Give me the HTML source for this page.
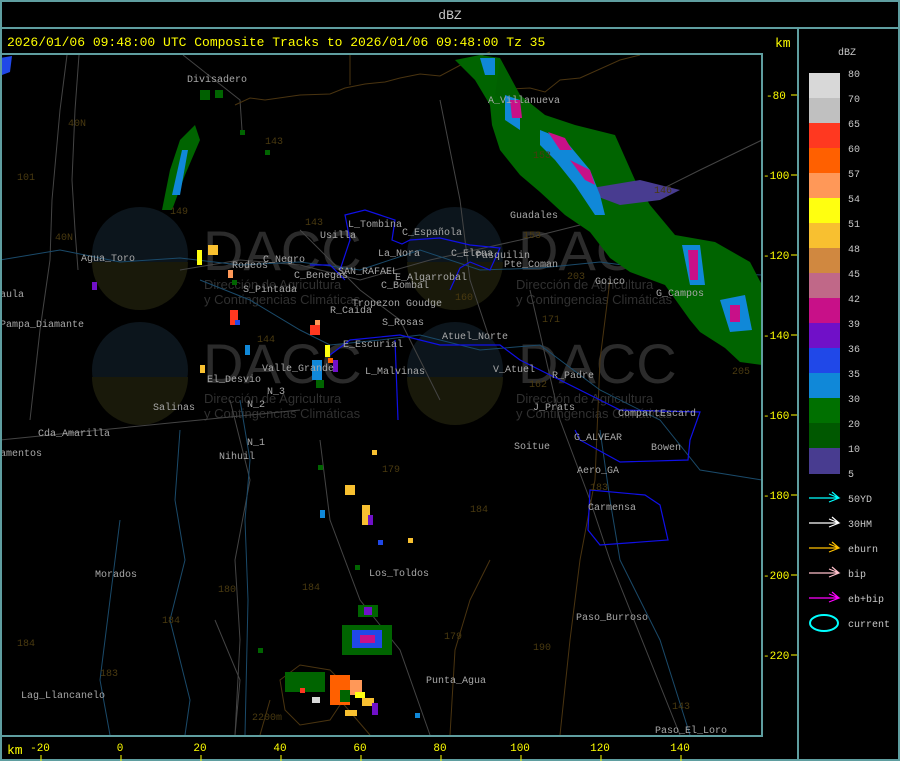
<!DOCTYPE html>
<html><head><meta charset="utf-8"><style>
html,body{margin:0;padding:0;background:#000;}
body{width:900px;height:761px;overflow:hidden;position:relative;}
svg{position:absolute;left:0;top:0;}
text{font-family:"Liberation Mono",monospace;}
</style></head><body>
<svg width="900" height="761" viewBox="0 0 900 761">
<rect width="900" height="761" fill="#000"/>
<g>
<circle cx="140" cy="255" r="48" fill="#0c151c"/><path d="M92 262 A48 48 0 0 0 188 262 Z" fill="#19190a"/>
<circle cx="140" cy="370" r="48" fill="#0c151c"/><path d="M92 377 A48 48 0 0 0 188 377 Z" fill="#19190a"/>
<circle cx="455" cy="255" r="48" fill="#0c151c"/><path d="M407 262 A48 48 0 0 0 503 262 Z" fill="#19190a"/>
<circle cx="455" cy="370" r="48" fill="#0c151c"/><path d="M407 377 A48 48 0 0 0 503 377 Z" fill="#19190a"/>
</g>
<g fill="#2b2b2b">
<text x="203" y="270" font-size="56" style="font-family:'Liberation Sans',sans-serif">DACC</text>
<text x="203" y="383" font-size="56" style="font-family:'Liberation Sans',sans-serif">DACC</text>
<text x="518" y="270" font-size="56" style="font-family:'Liberation Sans',sans-serif">DACC</text>
<text x="518" y="383" font-size="56" style="font-family:'Liberation Sans',sans-serif">DACC</text>
</g>
<g fill="#303030" font-size="13">
<text x="204" y="289" style="font-family:'Liberation Sans',sans-serif">Dirección de Agricultura</text>
<text x="204" y="304" style="font-family:'Liberation Sans',sans-serif">y Contingencias Climáticas</text>
<text x="204" y="403" style="font-family:'Liberation Sans',sans-serif">Dirección de Agricultura</text>
<text x="204" y="418" style="font-family:'Liberation Sans',sans-serif">y Contingencias Climáticas</text>
<text x="516" y="289" style="font-family:'Liberation Sans',sans-serif">Dirección de Agricultura</text>
<text x="516" y="304" style="font-family:'Liberation Sans',sans-serif">y Contingencias Climáticas</text>
<text x="516" y="403" style="font-family:'Liberation Sans',sans-serif">Dirección de Agricultura</text>
<text x="516" y="418" style="font-family:'Liberation Sans',sans-serif">y Contingencias Climáticas</text>
</g>
<g stroke="#444" fill="none" stroke-width="1">
<path d="M67 55 L60 110 L52 200 L50 260 L40 330 L30 420"/>
<path d="M79 55 L75 110 L72 180 L75 230 L78 270"/>
<path d="M183 55 L240 100 L242 130"/>
<path d="M300 230 L330 260 L360 290 L400 320 L420 360 L440 400"/>
<path d="M180 270 L240 260 L300 265 L360 280 L430 260 L520 240 L600 220 L700 170 L762 140"/>
<path d="M230 400 L250 480 L235 560 L240 640 L235 735"/>
<path d="M320 440 L330 520 L360 600 L400 650 L430 735"/>
<path d="M530 290 L560 420 L590 500 L610 560 L680 735"/>
<path d="M0 440 L100 430 L200 420 L300 410"/>
<path d="M440 100 L460 200 L470 280 L490 340"/>
<path d="M215 620 L240 680 L235 735"/>
</g>
<g stroke="#4a3410" fill="none" stroke-width="1">
<path d="M235 105 L250 98 L265 100 L300 95 L330 94 L345 88 L365 84 L385 82 L400 78 L420 74 L440 76 L470 60 L490 52"/>
<path d="M490 90 L530 88 L545 92 L560 80 L580 78 L620 60 L640 55"/>
<path d="M350 55 L350 85"/>
<path d="M610 280 L600 360 L595 480 L580 560 L570 640 L560 735"/>
<path d="M280 680 L300 665 L330 670 L350 690 L330 720 L300 725 L285 710 Z"/>
<path d="M270 700 L260 735"/>
<path d="M340 700 L370 735"/>
<path d="M490 560 L470 600 L455 650 L450 735"/>
</g>
<g stroke="#1a4a6a" fill="none" stroke-width="1">
<path d="M0 260 L60 250 L120 262 L180 258 L240 265 L300 262 L360 270 L420 250 L480 270 L540 268 L600 262 L660 270 L762 275"/>
<path d="M200 280 L250 300 L300 330 L330 345 L380 340 L420 335 L480 350 L540 345 L600 390 L660 420 L700 470 L762 480"/>
<path d="M180 430 L175 500 L185 560 L170 620 L190 700 L185 735"/>
<path d="M240 400 L250 460 L245 520 L248 600 L245 735"/>
<path d="M120 520 L110 600 L100 680 L110 735"/>
<path d="M600 430 L610 500 L620 560 L660 640 L690 735"/>
</g>
<g stroke="#1010e8" fill="none" stroke-width="1.2">
<path d="M340 270 L350 240 L345 215 L365 210 L380 215 L395 220 L392 240 L402 244 L410 240 L440 238 L470 245 L500 248 L490 270 L470 262 L460 268 L450 290"/>
<path d="M330 355 L350 340 L400 335 L440 345 L500 345 L520 360 L560 380 L600 400 L620 410 L700 412 L690 440 L688 460 L620 462 L580 440 L575 430"/>
<path d="M395 340 L398 420"/>
<path d="M590 490 L645 495 L660 505 L668 540 L600 545 L588 530 Z"/>
<path d="M310 265 L330 265 L345 280"/>
</g>
<g>
<path d="M455 60 L480 55 L500 58 L520 95 L545 115 L575 125 L615 135 L635 180 L650 205 L675 235 L715 242 L750 262 L762 285 L762 365 L740 362 L725 348 L700 332 L690 320 L665 285 L630 272 L610 258 L590 232 L565 215 L540 192 L520 175 L500 150 L492 125 L490 105 L475 80 Z" fill="#006400"/>
<path d="M580 190 L640 180 L680 190 L660 200 L620 205 Z" fill="#483c90"/>
<path d="M500 60 L520 95 L510 110 L495 95 Z" fill="#006000"/>
<path d="M505 95 L520 100 L520 130 L505 120 Z" fill="#1088d8"/>
<path d="M540 130 L565 140 L590 170 L600 195 L605 215 L595 215 L575 185 L555 160 L540 145 Z" fill="#1088d8"/>
<path d="M548 132 L565 138 L572 150 L560 150 Z" fill="#c81088"/>
<path d="M570 160 L590 170 L595 185 L585 180 Z" fill="#c81088"/>
<path d="M682 245 L700 245 L705 285 L690 285 Z" fill="#1088d8"/>
<path d="M688 250 L698 250 L698 280 L690 280 Z" fill="#c81088"/>
<path d="M720 300 L745 295 L752 330 L730 332 Z" fill="#1088d8"/>
<path d="M730 305 L740 305 L740 322 L730 322 Z" fill="#c81088"/>
<path d="M510 100 L520 100 L522 118 L512 118 Z" fill="#c81088"/>
<path d="M480 58 L495 58 L495 75 L485 75 Z" fill="#1088d8"/>
<path d="M195 125 L200 140 L185 175 L172 210 L162 210 L170 170 L180 140 Z" fill="#006400"/>
<path d="M182 150 L188 150 L180 195 L172 195 Z" fill="#1088d8"/>
<path d="M0 58 L12 56 L10 72 L2 75 Z" fill="#2048e8"/>
<rect x="342" y="625" width="50" height="30" fill="#006400"/>
<rect x="352" y="630" width="30" height="18" fill="#2048e8"/>
<rect x="360" y="635" width="15" height="8" fill="#c81088"/>
<rect x="358" y="605" width="20" height="12" fill="#006400"/>
<rect x="364" y="607" width="8" height="8" fill="#7010c8"/>
<rect x="285" y="672" width="40" height="20" fill="#006400"/>
<rect x="330" y="675" width="20" height="30" fill="#ff6000"/>
<rect x="340" y="690" width="10" height="12" fill="#006400"/>
<rect x="350" y="680" width="12" height="15" fill="#ff9858"/>
<rect x="355" y="692" width="10" height="6" fill="#ffff10"/>
<rect x="362" y="698" width="12" height="8" fill="#f8c030"/>
<rect x="372" y="703" width="6" height="12" fill="#7010c8"/>
<rect x="312" y="697" width="8" height="6" fill="#d8d8d8"/>
<rect x="345" y="710" width="12" height="6" fill="#f8c030"/>
<rect x="300" y="688" width="5" height="5" fill="#ff3820"/>
</g>
<g>
<rect x="200" y="90" width="10" height="10" fill="#006000"/><rect x="215" y="90" width="8" height="8" fill="#006400"/>
<rect x="240" y="130" width="5" height="5" fill="#006400"/><rect x="265" y="150" width="5" height="5" fill="#006400"/>
<rect x="197" y="250" width="5" height="15" fill="#ffff10"/><rect x="208" y="245" width="10" height="10" fill="#f8c030"/>
<rect x="228" y="270" width="5" height="8" fill="#ff9858"/><rect x="232" y="280" width="5" height="5" fill="#006400"/>
<rect x="230" y="310" width="8" height="15" fill="#ff3820"/><rect x="235" y="320" width="5" height="5" fill="#2048e8"/>
<rect x="245" y="345" width="5" height="10" fill="#1088d8"/><rect x="200" y="365" width="5" height="8" fill="#f8c030"/>
<rect x="310" y="325" width="10" height="10" fill="#ff3820"/><rect x="315" y="320" width="5" height="5" fill="#ff9858"/>
<rect x="325" y="345" width="5" height="12" fill="#ffff10"/><rect x="328" y="358" width="5" height="5" fill="#ff6000"/>
<rect x="312" y="360" width="10" height="20" fill="#1088d8"/><rect x="316" y="380" width="8" height="8" fill="#006400"/>
<rect x="333" y="360" width="5" height="12" fill="#7010c8"/>
<rect x="372" y="450" width="5" height="5" fill="#f8c030"/><rect x="345" y="485" width="10" height="10" fill="#f8c030"/>
<rect x="362" y="505" width="8" height="20" fill="#f8c030"/><rect x="368" y="515" width="5" height="10" fill="#7010c8"/>
<rect x="378" y="540" width="5" height="5" fill="#2048e8"/><rect x="408" y="538" width="5" height="5" fill="#f8c030"/>
<rect x="320" y="510" width="5" height="8" fill="#1088d8"/><rect x="318" y="465" width="5" height="5" fill="#006400"/>
<rect x="355" y="565" width="5" height="5" fill="#006400"/><rect x="92" y="282" width="5" height="8" fill="#7010c8"/>
<rect x="415" y="713" width="5" height="5" fill="#1088d8"/><rect x="258" y="648" width="5" height="5" fill="#006400"/>
</g>
<g fill="#a8a8a8" font-size="10">
<text x="187" y="82">Divisadero</text>
<text x="488" y="103">A_Villanueva</text>
<text x="510" y="218">Guadales</text>
<text x="320" y="238">Usilla</text><text x="348" y="227">L_Tombina</text>
<text x="402" y="235">C_Española</text><text x="378" y="256">La_Nora</text>
<text x="451" y="256">C_Elena</text><text x="476" y="258">Pasquilin</text><text x="504" y="267">Pte_Coman</text>
<text x="81" y="261">Agua_Toro</text><text x="232" y="268">Rodeos</text><text x="263" y="262">C_Negro</text>
<text x="294" y="278">C_Benegas</text><text x="338" y="274">SAN_RAFAEL</text><text x="395" y="280">E_Algarrobal</text>
<text x="381" y="288">C_Bombal</text><text x="595" y="284">Goico</text><text x="656" y="296">G_Campos</text>
<text x="243" y="292">S_Pintada</text><text x="352" y="306">Tropezon Goudge</text>
<text x="330" y="313">R_Caida</text><text x="382" y="325">S_Rosas</text><text x="442" y="339">Atuel_Norte</text>
<text x="343" y="347">E_Escurial</text><text x="0" y="297">aula</text><text x="0" y="327">Pampa_Diamante</text>
<text x="262" y="371">Valle_Grande</text><text x="365" y="374">L_Malvinas</text><text x="493" y="372">V_Atuel</text>
<text x="552" y="378">R_Padre</text><text x="207" y="382">El_Desvio</text><text x="267" y="394">N_3</text>
<text x="247" y="407">N_2</text><text x="153" y="410">Salinas</text><text x="533" y="410">J_Prats</text>
<text x="618" y="416">CompartEscard</text><text x="38" y="436">Cda_Amarilla</text><text x="574" y="440">G_ALVEAR</text>
<text x="247" y="445">N_1</text><text x="514" y="449">Soitue</text><text x="651" y="450">Bowen</text>
<text x="0" y="456">amentos</text><text x="219" y="459">Nihuil</text><text x="577" y="473">Aero_GA</text>
<text x="588" y="510">Carmensa</text><text x="369" y="576">Los_Toldos</text><text x="95" y="577">Morados</text>
<text x="576" y="620">Paso_Burroso</text><text x="426" y="683">Punta_Agua</text>
<text x="21" y="698">Lag_Llancanelo</text><text x="655" y="733">Paso_El_Loro</text>
</g>
<g fill="#4a3a10" font-size="10">
<text x="265" y="144">143</text><text x="305" y="225">143</text><text x="523" y="238">153</text><text x="567" y="279">203</text>
<text x="542" y="322">171</text><text x="455" y="300">160</text><text x="257" y="342">144</text><text x="529" y="387">162</text>
<text x="382" y="472">179</text><text x="470" y="512">184</text><text x="590" y="490">183</text><text x="302" y="590">184</text>
<text x="218" y="592">180</text><text x="162" y="623">184</text><text x="444" y="639">179</text><text x="533" y="650">190</text>
<text x="100" y="676">183</text><text x="17" y="646">184</text><text x="252" y="720">2200m</text><text x="672" y="709">143</text>
<text x="654" y="193">146</text><text x="533" y="158">153</text><text x="68" y="126">40N</text><text x="17" y="180">101</text>
<text x="55" y="240">40N</text><text x="170" y="214">149</text><text x="732" y="374">205</text>
</g>
<g stroke="#5f9ea0" stroke-width="2" fill="none">
<rect x="1" y="1" width="898" height="759"/>
<line x1="0" y1="28" x2="900" y2="28"/>
<line x1="798" y1="28" x2="798" y2="761"/>
<polyline points="0,54 762,54 762,736 0,736"/>
</g>
<text x="450" y="19" fill="#c8c8c8" font-size="13" text-anchor="middle">dBZ</text>
<text x="7" y="46" fill="#ffff00" font-size="13">2026/01/06 09:48:00 UTC Composite Tracks to 2026/01/06 09:48:00 Tz 35</text>
<text x="775" y="47" fill="#ffff00" font-size="13">km</text>
<g fill="#ffff00" font-size="11">
<text x="766" y="99">-80</text><text x="763" y="179">-100</text><text x="763" y="259">-120</text><text x="763" y="339">-140</text>
<text x="763" y="419">-160</text><text x="763" y="499">-180</text><text x="763" y="579">-200</text><text x="763" y="659">-220</text>
<text x="7" y="754" font-size="13">km</text>
<text x="40" y="751" text-anchor="middle">-20</text><text x="120" y="751" text-anchor="middle">0</text>
<text x="200" y="751" text-anchor="middle">20</text><text x="280" y="751" text-anchor="middle">40</text>
<text x="360" y="751" text-anchor="middle">60</text><text x="440" y="751" text-anchor="middle">80</text>
<text x="520" y="751" text-anchor="middle">100</text><text x="600" y="751" text-anchor="middle">120</text>
<text x="680" y="751" text-anchor="middle">140</text>
</g>
<g stroke="#ffff00" stroke-width="1">
<path d="M791 95h6M791 175h6M791 255h6M791 335h6M791 415h6M791 495h6M791 575h6M791 655h6"/>
<path d="M41 755v6M121 755v6M201 755v6M281 755v6M361 755v6M441 755v6M521 755v6M601 755v6M681 755v6"/>
</g>
<text x="838" y="55" fill="#c8c8c8" font-size="10">dBZ</text>
<g>
<rect x="809" y="73" width="31" height="25" fill="#d8d8d8"/><rect x="809" y="98" width="31" height="25" fill="#c0c0c0"/>
<rect x="809" y="123" width="31" height="25" fill="#ff3820"/><rect x="809" y="148" width="31" height="25" fill="#ff6000"/>
<rect x="809" y="173" width="31" height="25" fill="#ff9858"/><rect x="809" y="198" width="31" height="25" fill="#ffff10"/>
<rect x="809" y="223" width="31" height="25" fill="#f8c030"/><rect x="809" y="248" width="31" height="25" fill="#d08840"/>
<rect x="809" y="273" width="31" height="25" fill="#c06888"/><rect x="809" y="298" width="31" height="25" fill="#c81088"/>
<rect x="809" y="323" width="31" height="25" fill="#7010c8"/><rect x="809" y="348" width="31" height="25" fill="#2048e8"/>
<rect x="809" y="373" width="31" height="25" fill="#1088d8"/><rect x="809" y="398" width="31" height="25" fill="#007000"/>
<rect x="809" y="423" width="31" height="25" fill="#005800"/><rect x="809" y="448" width="31" height="26" fill="#483c90"/>
</g>
<g fill="#c8c8c8" font-size="10">
<text x="848" y="77">80</text><text x="848" y="102">70</text><text x="848" y="127">65</text><text x="848" y="152">60</text>
<text x="848" y="177">57</text><text x="848" y="202">54</text><text x="848" y="227">51</text><text x="848" y="252">48</text>
<text x="848" y="277">45</text><text x="848" y="302">42</text><text x="848" y="327">39</text><text x="848" y="352">36</text>
<text x="848" y="377">35</text><text x="848" y="402">30</text><text x="848" y="427">20</text><text x="848" y="452">10</text>
<text x="848" y="477">5</text>
<text x="848" y="502">50YD</text><text x="848" y="527">30HM</text><text x="848" y="552">eburn</text>
<text x="848" y="577">bip</text><text x="848" y="602">eb+bip</text><text x="848" y="627">current</text>
</g>
<g fill="none" stroke-width="1.2">
<path d="M809 498h30M829 494l10 4-10 4M832 492l7 6" stroke="#00ffff"/>
<path d="M809 523h30M829 519l10 4-10 4M832 517l7 6" stroke="#ffffff"/>
<path d="M809 548h30M829 544l10 4-10 4M832 542l7 6" stroke="#ffc000"/>
<path d="M809 573h30M829 569l10 4-10 4M832 567l7 6" stroke="#ffc0cb"/>
<path d="M809 598h30M829 594l10 4-10 4M832 592l7 6" stroke="#ff00ff"/>
<ellipse cx="824" cy="623" rx="14" ry="8" stroke="#00ffff" stroke-width="2"/>
</g>
</svg>
</body></html>
